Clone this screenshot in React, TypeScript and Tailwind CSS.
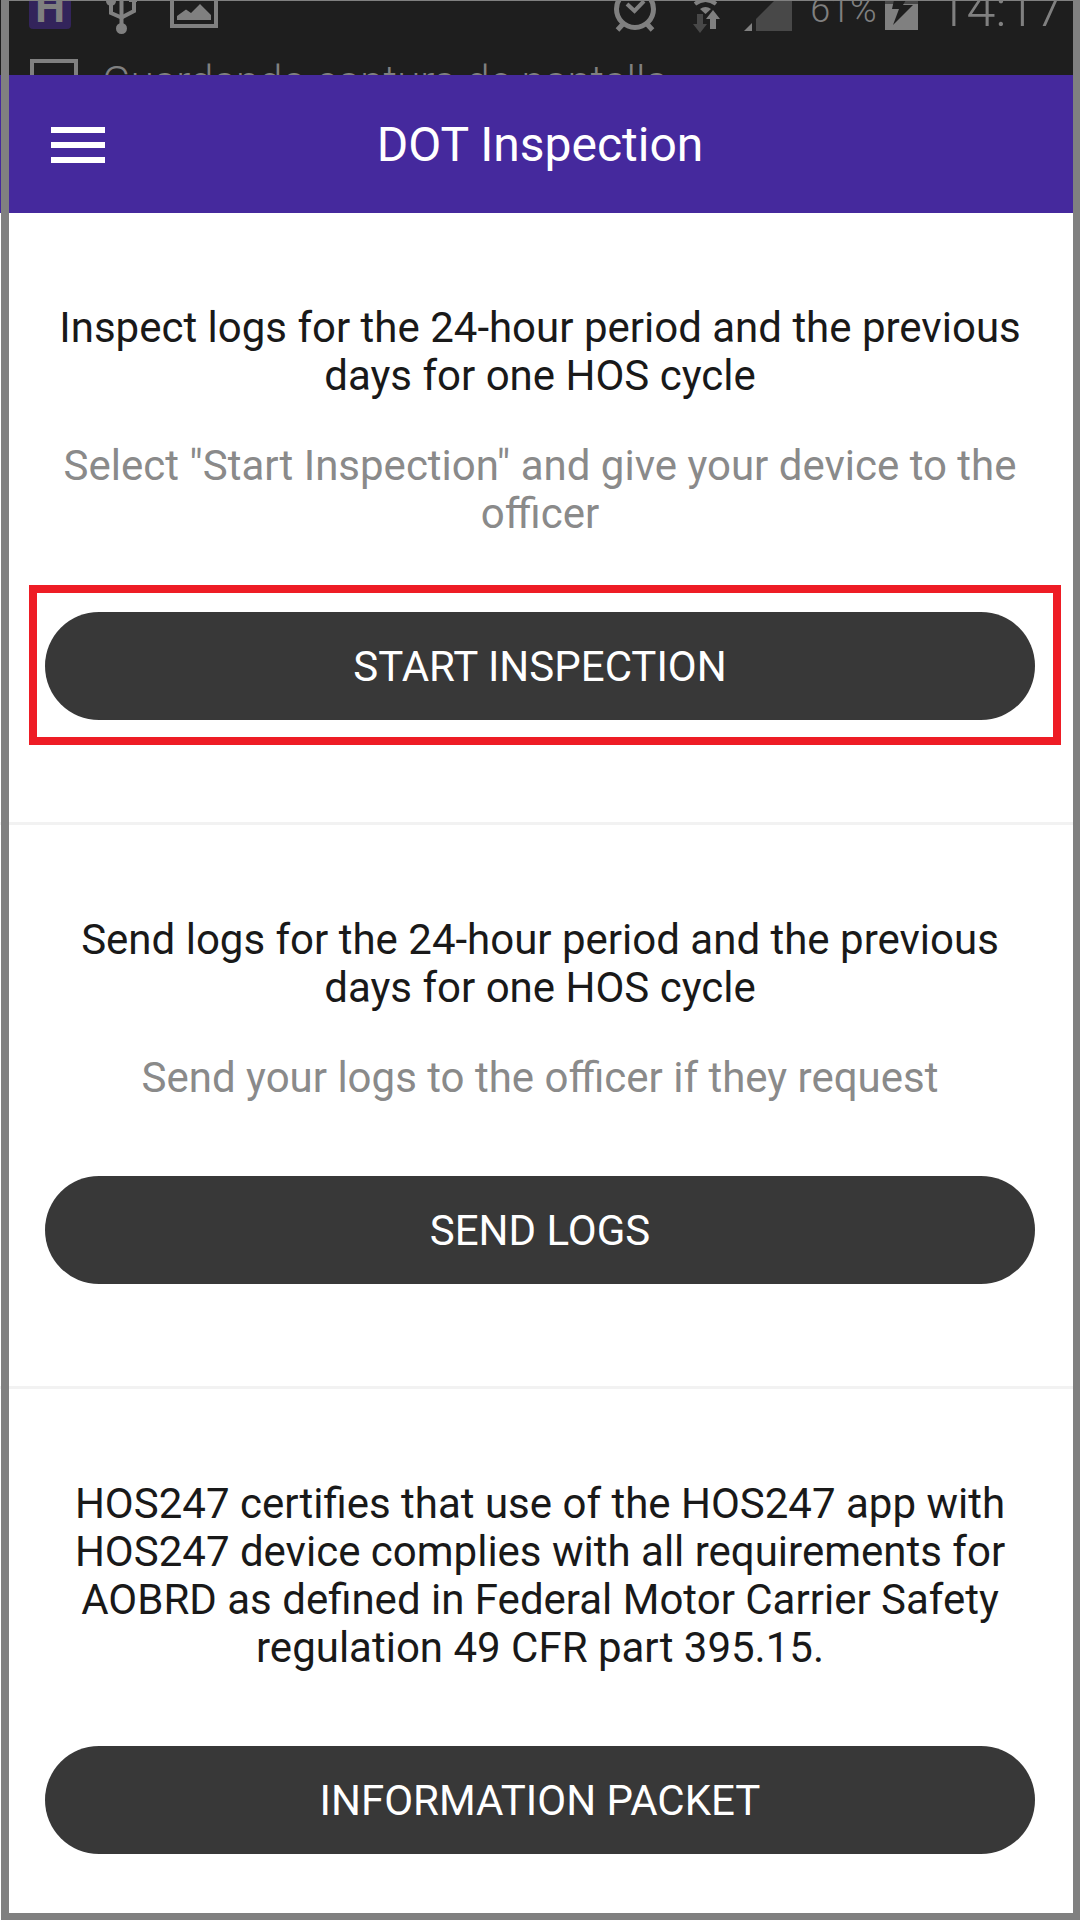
const sections = [
  {
    title: "Inspect logs for the 24-hour period and the previous days for one HOS cycle",
    hint: 'Select "Start Inspection" and give your device to the officer',
    action: "START INSPECTION",
    highlighted: true,
  },
  {
    title: "Send logs for the 24-hour period and the previous days for one HOS cycle",
    hint: "Send your logs to the officer if they request",
    action: "SEND LOGS",
  },
  {
    title:
      "HOS247 certifies that use of the HOS247 app with HOS247 device complies with all requirements for AOBRD as defined in Federal Motor Carrier Safety regulation 49 CFR part 395.15.",
    action: "INFORMATION PACKET",
  },
];

function UsbIcon() {
  return (
    <svg width="32" height="36" viewBox="105 0 32 36" fill="none" stroke="#808080">
      <path d="M121.5 0V28" strokeWidth="4" />
      <path d="M111 3V13L121.5 17.5L134 11V0" strokeWidth="4" />
      <circle cx="111" cy="1" r="5" fill="#808080" stroke="none" />
      <path d="M129 0H137V2H129Z" fill="#808080" stroke="none" />
      <circle cx="121.5" cy="28.5" r="5.5" fill="#808080" stroke="none" />
    </svg>
  );
}

function PictureIcon() {
  return (
    <svg width="48" height="28" viewBox="170 0 48 28">
      <path d="M172 -10V26H216V-10" fill="none" stroke="#808080" strokeWidth="4" />
      <path d="M177 20V16L186 9.5L191 13L200 4L211 15V20Z" fill="#808080" />
    </svg>
  );
}

function AlarmIcon() {
  return (
    <svg width="42" height="32" viewBox="614 0 42 32" fill="none" stroke="#808080" strokeWidth="5">
      <circle cx="635" cy="9" r="18.5" />
      <path d="M627 4L634.5 11L644 1" strokeWidth="4" />
      <path d="M623 24L617.5 30M647 24L652.5 30" />
    </svg>
  );
}

function WifiIcon() {
  return (
    <svg width="28" height="34" viewBox="691 0 28 34">
      <path d="M694 4Q704.5 -4 715 4" fill="none" stroke="#808080" strokeWidth="4" />
      <path d="M699 9Q704.5 5 710 9L704.5 14Z" fill="#808080" />
      <path d="M696 14H702V24H706L699 33L692 24H696Z" fill="#484848" />
      <path d="M709 29H715V19H719L712 10L705 19H709Z" fill="#808080" />
    </svg>
  );
}

function SignalIcon() {
  return (
    <svg width="48" height="31" viewBox="743 0 48 31">
      <path d="M743 31L751 23V31Z" fill="#808080" />
      <path d="M755 31V19L774 0H791V31Z" fill="#484848" />
    </svg>
  );
}

function BatteryIcon() {
  return (
    <svg width="33" height="30" viewBox="884 0 33 30">
      <path d="M884 0H917V4H884Z" fill="#484848" />
      <path d="M884 4H917V30H884Z" fill="#808080" />
      <path d="M893 0H905L902 5H912L892 25L898 9H891Z" fill="#1e1e1e" />
    </svg>
  );
}

function StatusBar() {
  return (
    <div className="h-[75px] overflow-hidden bg-[#1e1e1e] text-[#808080] font-light">
      <div className="h-[59px] flex items-start justify-between pl-[29px] pr-4">
        <div className="flex items-start">
          <div className="w-[42px] h-[29px] rounded-b-sm bg-[#33245b] text-center text-[42px] leading-4 font-bold">
            H
          </div>
          <div className="ml-[34px]">
            <UsbIcon />
          </div>
          <div className="ml-[33px]">
            <PictureIcon />
          </div>
        </div>
        <div className="flex items-start">
          <AlarmIcon />
          <div className="ml-9">
            <WifiIcon />
          </div>
          <div className="ml-6">
            <SignalIcon />
          </div>
          <span className="ml-[18px] text-[36px] leading-5">61%</span>
          <div className="ml-2">
            <BatteryIcon />
          </div>
          <span className="ml-5 text-[52px] leading-[18px]">14:17</span>
        </div>
      </div>
      <div className="flex items-start gap-6 pl-[30px]">
        <div className="w-12 h-10 border-4 border-[#808080]" />
        <p className="text-[42px] leading-[46px]">Guardando captura de pantalla</p>
      </div>
    </div>
  );
}

function Header() {
  return (
    <header className="grid grid-cols-[54px_1fr_54px] items-center h-[138px] px-[51px] pt-0.5 bg-[#45299d] text-white">
      <button type="button" aria-label="Menu" className="flex flex-col gap-[9px]">
        <span className="w-full h-[6px] bg-white" />
        <span className="w-full h-[6px] bg-white" />
        <span className="w-full h-[6px] bg-white" />
      </button>
      <h1 className="text-center text-5xl">DOT Inspection</h1>
    </header>
  );
}

export default function App() {
  return (
    <div className="relative min-h-screen bg-white font-['Roboto',sans-serif]">
      <StatusBar />
      <Header />
      <main className="divide-y-3 divide-[#f2f2f2] text-[42px] leading-[48px] text-center">
        {sections.map((section) => (
          <section key={section.action} className="px-[45px] pt-[91px] pb-[102px] last:pb-[66px]">
            <h2 className="text-[#191919]">{section.title}</h2>
            {section.hint && <p className="mt-[42px] text-[#8a8a8a]">{section.hint}</p>}
            <div className="relative mt-[74px]">
              <button type="button" className="w-full h-[108px] pt-0.5 rounded-full bg-[#383838] text-white">
                {section.action}
              </button>
              {section.highlighted && (
                <div className="absolute -top-[27px] -bottom-[25px] -left-4 -right-[26px] border-8 border-[#ee1c25] pointer-events-none" />
              )}
            </div>
          </section>
        ))}
      </main>
      <div className="absolute inset-y-0 left-px right-0 border-t border-l-8 border-r-[7px] border-b-[7px] border-[#808080] pointer-events-none" />
    </div>
  );
}
